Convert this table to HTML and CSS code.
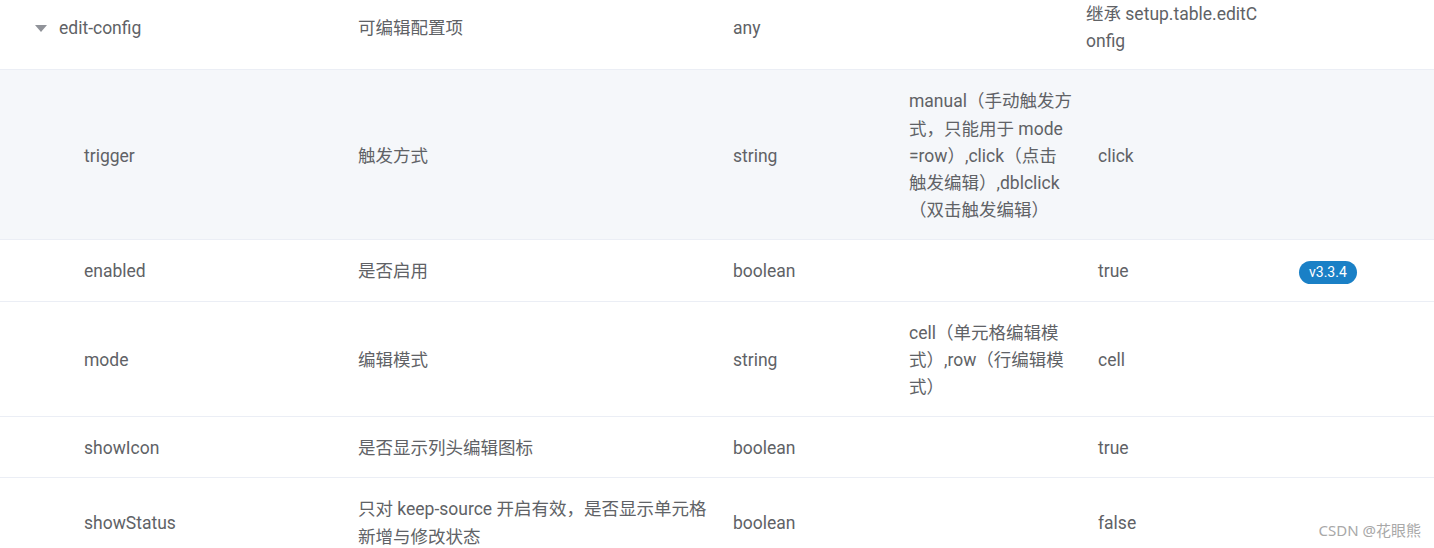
FILE: index.html
```html
<!DOCTYPE html>
<html lang="zh-CN">
<head>
<meta charset="utf-8">
<title>edit-config</title>
<link rel="stylesheet" href="styles.css">
</head>
<body>
<div class="table">
  <div class="row first">
    <div class="cell name parent"><span class="caret"></span><span>edit-config</span></div>
    <div class="cell">可编辑配置项</div>
    <div class="cell">any</div>
    <div class="cell"></div>
    <div class="cell inherit">继承 setup.table.editConfig</div>
    <div class="cell"></div>
  </div>
  <div class="row hl">
    <div class="cell name child">trigger</div>
    <div class="cell">触发方式</div>
    <div class="cell">string</div>
    <div class="cell"><span>manual（手动触发方<br>式，只能用于 mode<br>=row）,click（点击<br>触发编辑）,dblclick<br>（双击触发编辑）</span></div>
    <div class="cell">click</div>
    <div class="cell"></div>
  </div>
  <div class="row">
    <div class="cell name child">enabled</div>
    <div class="cell">是否启用</div>
    <div class="cell">boolean</div>
    <div class="cell"></div>
    <div class="cell">true</div>
    <div class="cell ver"><span class="badge">v3.3.4</span></div>
  </div>
  <div class="row">
    <div class="cell name child">mode</div>
    <div class="cell">编辑模式</div>
    <div class="cell">string</div>
    <div class="cell"><span>cell（单元格编辑模<br>式）,row（行编辑模<br>式）</span></div>
    <div class="cell">cell</div>
    <div class="cell"></div>
  </div>
  <div class="row">
    <div class="cell name child">showIcon</div>
    <div class="cell">是否显示列头编辑图标</div>
    <div class="cell">boolean</div>
    <div class="cell"></div>
    <div class="cell">true</div>
    <div class="cell"></div>
  </div>
  <div class="row">
    <div class="cell name child">showStatus</div>
    <div class="cell">只对 keep-source 开启有效，是否显示单元格新增与修改状态</div>
    <div class="cell">boolean</div>
    <div class="cell"></div>
    <div class="cell">false</div>
    <div class="cell"></div>
  </div>
</div>
<div class="watermark">CSDN @花眼熊</div>
</body>
</html>
```
FILE: styles.css
```css
html, body {
  margin: 0;
  padding: 0;
  background: #ffffff;
  overflow: hidden;
}
body {
  font-family: Roboto, "Noto Sans CJK SC", sans-serif;
  font-size: 17.5px;
  color: #606266;
  width: 1434px;
  height: 548px;
}
.row {
  display: grid;
  grid-template-columns: 346px 375px 176px 189px 176px 1fr;
  border-bottom: 1px solid #ebeef5;
}
.row.hl {
  background: #f5f7fa;
}
.cell {
  display: flex;
  align-items: center;
  padding: 18px 12px 15px;
  line-height: 27.2px;
  word-break: break-all;
}
.row.first .cell {
  padding-top: 1px;
  padding-bottom: 14px;
}
.row.first .cell.inherit {
  padding-left: 0;
  padding-right: 0;
}
.cell.name.parent {
  padding-left: 35px;
}
.cell.name.child {
  padding-left: 84px;
}
.caret {
  width: 0;
  height: 0;
  border-left: 6.5px solid transparent;
  border-right: 6.5px solid transparent;
  border-top: 7px solid #909399;
  margin-right: 12px;
  flex: none;
}
.cell.ver {
  padding-left: 37px;
}
.badge {
  display: inline-block;
  background: #1a80c6;
  color: #ffffff;
  font-size: 14px;
  line-height: 23px;
  height: 23px;
  padding: 0 10px;
  border-radius: 12px;
}
.watermark {
  position: absolute;
  right: 13px;
  top: 519px;
  font-size: 15px;
  color: #a8a8a8;
  font-family: "Noto Sans", "Noto Sans CJK SC", sans-serif;
}
```
